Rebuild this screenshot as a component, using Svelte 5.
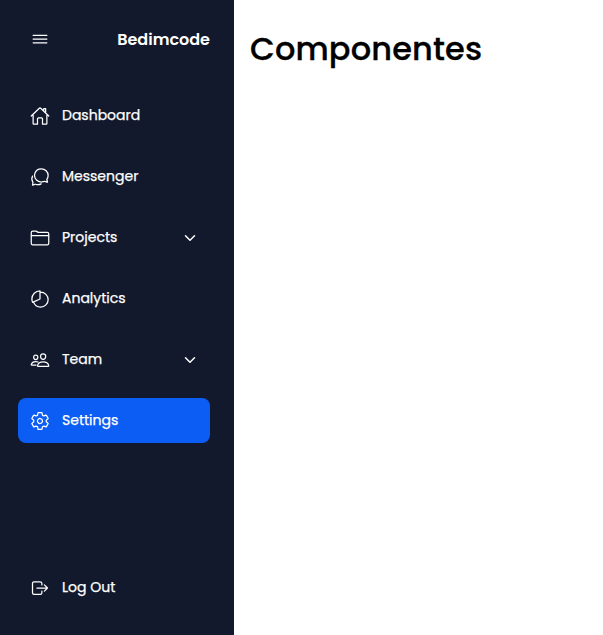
<script>
  const icons = {
    menu: 'M80 160h352M80 256h352M80 352h352',
    home: 'M80 212v236a16 16 0 0016 16h96V328a24 24 0 0124-24h80a24 24 0 0124 24v136h96a16 16 0 0016-16V212M480 256L266.89 52c-5-5.28-16.69-5.34-21.78 0L32 256M400 179V64h-48v69',
    chat: 'M431 320.6c-1-3.6 1.2-8.6 3.3-12.2a33.68 33.68 0 012.1-3.1A162 162 0 00464 215c.3-92.2-77.5-167-173.7-167-83.9 0-153.9 57.1-170.3 132.9a160.7 160.7 0 00-3.7 34.2c0 92.3 74.8 169.1 171 169.1 15.3 0 35.9-4.6 47.2-7.7s22.5-7.2 25.4-8.3a26.44 26.44 0 019.3-1.7 26 26 0 0110.1 2l56.7 20.1a13.52 13.52 0 003.9 1 8 8 0 008-8 12.85 12.85 0 00-.5-2.7zM66.46 232a146.23 146.23 0 006.39 152.67c2.31 3.49 3.61 6.19 3.21 8s-11.93 61.87-11.93 61.87a8 8 0 002.71 7.68A8.17 8.17 0 0072 464a7.26 7.26 0 002.91-.6l56.21-22a15.7 15.7 0 0112 .2c18.94 7.38 39.88 12 60.83 12A159.21 159.21 0 00284 432.11',
    folder: 'M440 432H72a40 40 0 01-40-40V120a40 40 0 0140-40h75.89a40 40 0 0122.19 6.72l27.84 18.56a40 40 0 0022.19 6.72H440a40 40 0 0140 40v240a40 40 0 01-40 40zM32 192h448',
    pie: 'M256.05 80.65Q263.94 80 272 80c106 0 192 86 192 192s-86 192-192 192A192.09 192.09 0 0189.12 330.65M256 48C141.12 48 48 141.12 48 256a207.29 207.29 0 0018.09 85L256 256z',
    people: 'M402 168c-2.93 40.67-33.1 72-66 72s-63.12-31.32-66-72c-3-42.31 26.37-72 66-72s69 30.46 66 72zM336 304c-65.17 0-127.84 32.37-143.54 95.41-2.08 8.34 3.15 16.59 11.72 16.59h263.65c8.57 0 13.77-8.25 11.72-16.59C463.85 335.36 401.18 304 336 304zM200 185.94c-2.34 32.48-26.72 58.06-53 58.06s-50.7-25.57-53-58.06C91.61 152.15 115.34 128 147 128s55.39 24.77 53 57.94zM206 306c-18.05-8.27-37.93-11.45-59-11.45-52 0-102.1 25.85-114.65 76.2-1.65 6.66 2.53 13.25 9.37 13.25H154',
    settings: 'M262.29 192.31a64 64 0 1057.4 57.4 64.13 64.13 0 00-57.4-57.4zM416.39 256a154.34 154.34 0 01-1.53 20.79l45.21 35.46a10.81 10.81 0 012.45 13.75l-42.77 74a10.81 10.81 0 01-13.14 4.59l-44.9-18.08a16.11 16.11 0 00-15.17 1.75A164.48 164.48 0 01325 400.8a15.94 15.94 0 00-8.82 12.14l-6.73 47.89a11.08 11.08 0 01-10.68 9.17h-85.54a11.11 11.11 0 01-10.69-8.87l-6.72-47.82a16.07 16.07 0 00-9-12.22 155.3 155.3 0 01-21.46-12.57 16 16 0 00-15.11-1.71l-44.89 18.07a10.81 10.81 0 01-13.14-4.58l-42.77-74a10.8 10.8 0 012.45-13.75l38.21-30a16.05 16.05 0 006-14.08c-.36-4.17-.58-8.33-.58-12.5s.21-8.27.58-12.35a16 16 0 00-6.07-13.94l-38.19-30A10.81 10.81 0 0149.48 186l42.77-74a10.81 10.81 0 0113.14-4.59l44.9 18.08a16.11 16.11 0 0015.17-1.75A164.48 164.48 0 01187 111.2a15.94 15.94 0 008.82-12.14l6.73-47.89A11.08 11.08 0 01213.23 42h85.54a11.11 11.11 0 0110.69 8.87l6.72 47.82a16.07 16.07 0 009 12.22 155.3 155.3 0 0121.46 12.57 16 16 0 0015.11 1.71l44.89-18.07a10.81 10.81 0 0113.14 4.58l42.77 74a10.8 10.8 0 01-2.45 13.75l-38.21 30a16.05 16.05 0 00-6.05 14.08c.33 4.14.55 8.3.55 12.47z',
    logout: 'M304 336v40a40 40 0 01-40 40H104a40 40 0 01-40-40V136a40 40 0 0140-40h152c22.09 0 48 17.91 48 40v40M368 336l80-80-80-80M176 256h256'
  };

  const links = [
    { label: 'Dashboard', icon: 'home' },
    { label: 'Messenger', icon: 'chat' },
    { label: 'Projects', icon: 'folder', expandable: true },
    { label: 'Analytics', icon: 'pie' },
    { label: 'Team', icon: 'people', expandable: true },
    { label: 'Settings', icon: 'settings' }
  ];
  const logout = { label: 'Log Out', icon: 'logout' };
  let active = $state('Settings');
</script>

{#snippet icon(name)}
  <svg class="icon" viewBox="0 0 512 512" aria-hidden="true"><path d={icons[name]} /></svg>
{/snippet}

{#snippet row(link)}
  <button class="link" class:active={active === link.label} onclick={() => (active = link.label)}>
    {@render icon(link.icon)}
    <span class="name">{link.label}</span>
    {#if link.expandable}
      <svg class="chevron" viewBox="0 0 512 512" aria-hidden="true"><path d="M112 184l144 144 144-144" /></svg>
    {/if}
  </button>
{/snippet}

<div class="page">
  <nav class="sidebar">
    <div class="brand">
      {@render icon('menu')}
      <span class="logo">Bedimcode</span>
    </div>
    <div class="list">
      {#each links as link}
        {@render row(link)}
      {/each}
    </div>
    {@render row(logout)}
  </nav>
  <main>
    <h1>Componentes</h1>
  </main>
</div>

<style>
  :global(body) { margin: 0; background: #fff; }
  .page {
    display: flex;
    height: 635px;
    font-family: Poppins, Inter, 'Open Sans', sans-serif;
  }
  .sidebar {
    box-sizing: border-box;
    width: 234px;
    flex: none;
    display: flex;
    flex-direction: column;
    padding: 27px 24px 25px 18px;
    background: #12192c;
    color: #fff;
  }
  .brand {
    display: flex;
    align-items: center;
    justify-content: space-between;
    height: 24px;
    padding-left: 12px;
    margin-bottom: 42px;
  }
  .logo { font-size: 16px; font-weight: 600; line-height: 24px; padding-top: 2px; }
  .list { display: flex; flex-direction: column; gap: 16px; flex: 1; }
  .link {
    display: flex;
    align-items: center;
    gap: 12px;
    height: 45px;
    flex: none;
    padding: 0 12px;
    border: 0;
    border-radius: 8px;
    background: transparent;
    color: #fff;
    font: inherit;
    font-size: 14px;
    font-weight: 400;
    text-align: left;
    cursor: pointer;
  }
  .link.active { background: #0c5df4; }
  .name { flex: 1; line-height: 22px; padding-bottom: 2px; white-space: nowrap; -webkit-text-stroke: 0.25px currentColor; }
  svg {
    fill: none;
    stroke: currentColor;
    stroke-width: 32;
    stroke-linecap: round;
    stroke-linejoin: round;
    flex: none;
  }
  .icon { width: 20px; height: 20px; }
  .link .icon { margin-top: 1px; }
  .chevron { width: 16px; height: 16px; stroke-width: 48; margin-top: 1px; }
  main { padding: 25px 16px; }
  h1 { margin: 0; font-size: 32px; line-height: 48px; font-weight: 500; letter-spacing: 0.15px; color: #000; -webkit-text-stroke: 0.3px #000; }
</style>
